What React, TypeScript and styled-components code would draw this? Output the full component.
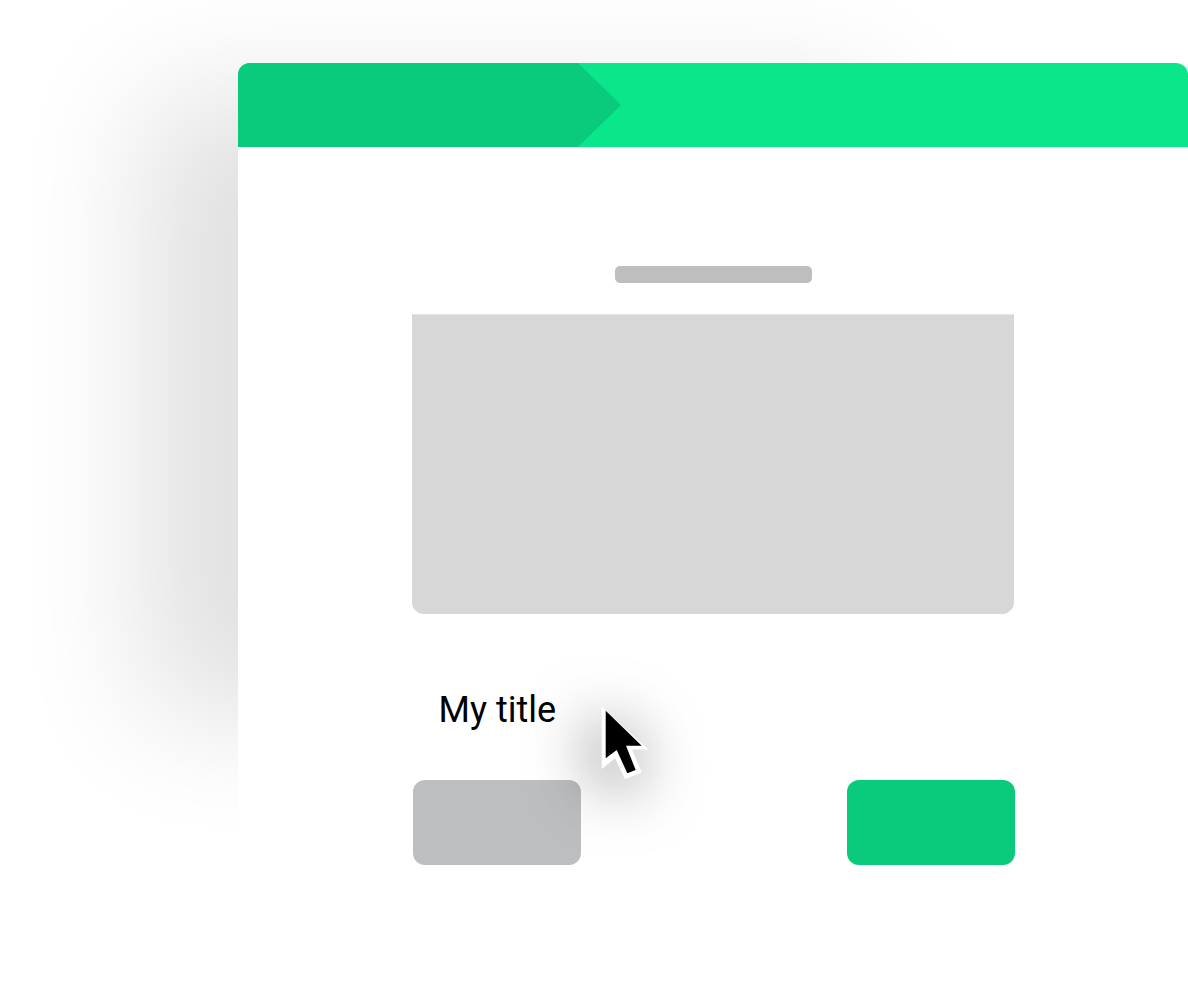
import React from "react";
import styled, {createGlobalStyle} from "styled-components";

const GlobalStyle = createGlobalStyle`
  html, body {
    margin: 0;
    padding: 0;
    background: #ffffff;
  }
`;

const Page = styled.div`
  position: relative;
  height: 1005px;
  padding: 63px 0 0 238px;
  box-sizing: border-box;
  overflow: hidden;
`;

const Card = styled.div`
  width: 950px;
  height: 837px;
  background: #ffffff;
  border-radius: 12px 12px 0 0;
  box-shadow: -201px -76px 120px -108px rgba(0, 0, 0, 0.122);
  display: flex;
  flex-direction: column;
`;

const Header = styled.div`
  height: 84px;
  flex: none;
  display: flex;
  background: #0ae78a;
  border-radius: 12px 12px 0 0;
  overflow: hidden;
`;

const ActiveStep = styled.div`
  width: 383px;
  background: #0aca7c;
  clip-path: polygon(0 0, 340px 0, 100% 50%, 340px 100%, 0 100%);
`;

const Body = styled.div`
  width: 603px;
  margin: 0 auto;
  padding-top: 119px;
  display: flex;
  flex-direction: column;
`;

const Label = styled.div`
  width: 197px;
  height: 17px;
  align-self: center;
  background: #bebebe;
  border-radius: 5px;
`;

const Preview = styled.div`
  width: 602px;
  height: 300px;
  margin-top: 31px;
  box-sizing: border-box;
  background: #d7d7d7;
  border-top: 1px solid #e6e6e6;
  border-radius: 0 0 12px 12px;
`;

const Title = styled.h1`
  margin: 73px 0 0 27px;
  font-family: Roboto, sans-serif;
  font-weight: 400;
  font-size: 36px;
  line-height: 46px;
  color: #000000;
`;

const Actions = styled.div`
  margin: 47px 0 0 1px;
  display: flex;
  justify-content: space-between;
  width: 602px;
`;

const ActionButton = styled.div<{$primary?: boolean}>`
  width: 168px;
  height: 85px;
  border-radius: 12px;
  background: ${({$primary}) => ($primary ? "#0aca7c" : "#bcbec0")};
`;

const Pointer = styled.svg`
  position: absolute;
  left: 590px;
  top: 695px;
  width: 70px;
  height: 95px;
  overflow: visible;
  filter: drop-shadow(-6px 10px 32px rgba(0, 0, 0, 0.65));
`;

const App = () => {
    return (
        <Page>
            <GlobalStyle />
            <Card>
                <Header>
                    <ActiveStep />
                </Header>
                <Body>
                    <Label />
                    <Preview />
                    <Title>My title</Title>
                    <Actions>
                        <ActionButton />
                        <ActionButton $primary />
                    </Actions>
                </Body>
            </Card>
            <Pointer viewBox="0 0 70 95">
                <polygon
                    points="11.7,11.7 58.3,54.5 42,54.5 51.7,77.5 35,84 25,63.3 11.7,74"
                    fill="#ffffff"
                />
                <polygon
                    points="15.7,15.7 51.7,50.7 36,50.7 45.7,75 37.3,78.3 26.7,55 15.7,63.3"
                    fill="#000000"
                />
            </Pointer>
        </Page>
    );
};

export default App;
